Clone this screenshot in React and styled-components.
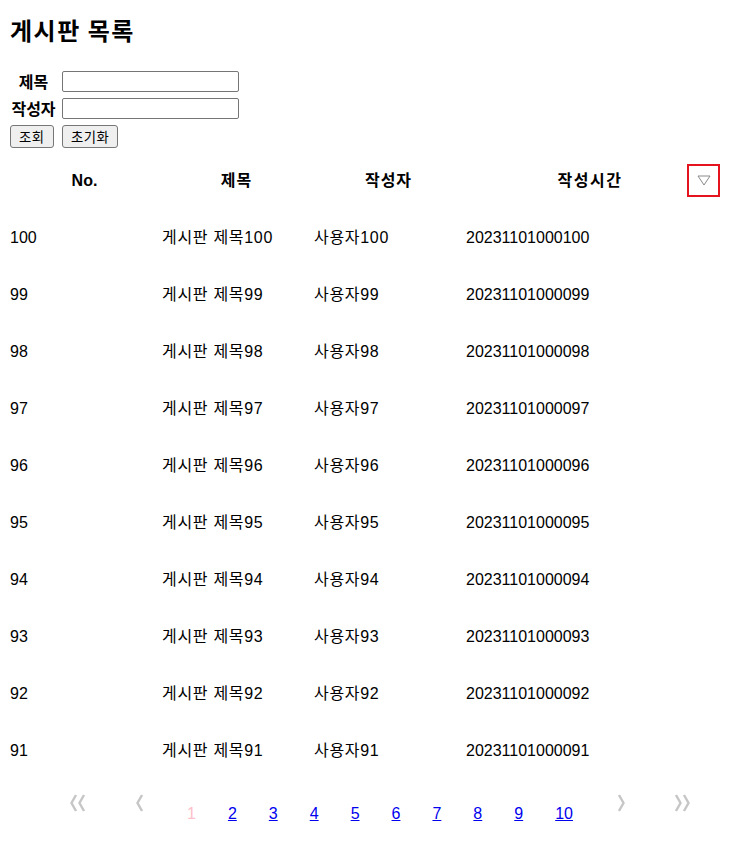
import styled, { createGlobalStyle } from 'styled-components';

const GlobalStyle = createGlobalStyle`
  body {
    margin: 0;
    background: #fff;
    color: #000;
    font-family: "Liberation Sans", "Noto Sans CJK KR", sans-serif;
  }
`;

const rows = Array.from({ length: 10 }, (_, i) => 100 - i);
const pages = [1, 2, 3, 4, 5, 6, 7, 8, 9, 10];

const Chevron = ({ dir = 'left', double = false }) => {
  const one = dir === 'left' ? 'M6 1 L1.5 9 L6 17' : 'M1 1 L5.5 9 L1 17';
  return (
    <svg width={double ? 16 : 7} height="18" viewBox={double ? '0 0 16 18' : '0 0 7 18'}>
      <path d={one} fill="none" stroke="#c6c6c6" strokeWidth="2.4" />
      {double && <path d={one} transform="translate(8 0)" fill="none" stroke="#c6c6c6" strokeWidth="2.4" />}
    </svg>
  );
};

const App = () => {
  return (
    <>
      <GlobalStyle />
      <Page>
        <Title>게시판 목록</Title>
        <SearchForm>
          <Label>제목</Label>
          <Input type="text" />
          <Label>작성자</Label>
          <Input type="text" />
          <Btn>조회</Btn>
          <Btn>초기화</Btn>
        </SearchForm>

        <Board>
          <Head>No.</Head>
          <Head $spaced>제목</Head>
          <Head $spaced>작성자</Head>
          <LastHead>
            <span />
            <HeadText>작성시간</HeadText>
            <SortBtn>
              <svg width="14" height="11" viewBox="0 0 14 11">
                <path d="M1 1 L13 1 L7 10 Z" fill="none" stroke="#8a8a8a" strokeWidth="1" />
              </svg>
            </SortBtn>
          </LastHead>
          {rows.map((n) => (
            <Row key={n}>
              <Cell>{n}</Cell>
              <Cell $spaced>게시판 제목{n}</Cell>
              <Cell $spaced>사용자{n}</Cell>
              <Cell>20231101000{String(n).padStart(3, '0')}</Cell>
            </Row>
          ))}
        </Board>

        <Pager>
          <Arrow $gap={50}><Chevron dir="left" double /></Arrow>
          <Arrow $gap={44}><Chevron dir="left" /></Arrow>
          <Numbers>
            {pages.map((p) => (
              <PageLink key={p} href="#" $active={p === 1}>{p}</PageLink>
            ))}
          </Numbers>
          <Arrow $left={45}><Chevron dir="right" /></Arrow>
          <Arrow $left={50}><Chevron dir="right" double /></Arrow>
        </Pager>
      </Page>
    </>
  );
};

export default App;

const Page = styled.div`
  padding: 16px 0 0 10px;
`;

const Title = styled.h2`
  margin: 0;
  font-family: "Noto Sans CJK KR", sans-serif;
  font-size: 24px;
  font-weight: bold;
  line-height: 28px;
  letter-spacing: 1.5px;
`;

const SearchForm = styled.div`
  display: grid;
  grid-template-columns: 47px 177px;
  column-gap: 5px;
  row-gap: 6px;
  margin-top: 27px;
  align-items: center;
  justify-items: start;
`;

const Label = styled.label`
  justify-self: stretch;
  text-align: center;
  font-family: "Noto Sans CJK KR", sans-serif;
  font-size: 16px;
  font-weight: 600;
  line-height: 21px;
`;

const Input = styled.input`
  box-sizing: border-box;
  width: 177px;
  height: 21px;
  padding: 1px 2px;
  border: 1px solid #767676;
  border-radius: 2px;
  background: #fff;
`;

const Btn = styled.button`
  box-sizing: border-box;
  height: 23px;
  padding: 0 8px;
  border: 1px solid #767676;
  border-radius: 3px;
  background: #efefef;
  color: #000;
  font-family: "Noto Sans CJK KR", sans-serif;
  font-size: 13.33px;
  line-height: 19px;
  letter-spacing: 0.5px;
`;

const Board = styled.div`
  display: grid;
  grid-template-columns: 149px 149px 149px 255px;
  column-gap: 3px;
  margin-top: 4px;
`;

const Row = styled.div`
  display: contents;
`;

const Head = styled.div`
  height: 57px;
  display: flex;
  align-items: center;
  justify-content: center;
  font-size: 16px;
  line-height: 20px;
  font-weight: bold;
  letter-spacing: ${(p) => (p.$spaced ? '1px' : '0')};
`;

const LastHead = styled.div`
  height: 57px;
  display: grid;
  grid-template-columns: 1fr auto 1fr;
  align-items: center;
`;

const HeadText = styled.span`
  margin-right: 7px;
  font-size: 16px;
  line-height: 20px;
  font-weight: bold;
  letter-spacing: 1.5px;
`;

const SortBtn = styled.button`
  justify-self: end;
  box-sizing: border-box;
  width: 33px;
  height: 33px;
  margin-right: 1px;
  padding: 0;
  display: flex;
  align-items: center;
  justify-content: center;
  border: 2px solid #e5131d;
  background: #fff;
`;

const Cell = styled.div`
  height: 57px;
  display: flex;
  align-items: center;
  font-size: 16px;
  line-height: 20px;
  letter-spacing: ${(p) => (p.$spaced ? '0.7px' : '0')};
`;

const Pager = styled.div`
  display: flex;
  align-items: flex-start;
  padding: 15px 0 0 60px;
`;

const Arrow = styled.span`
  display: flex;
  margin-right: ${(p) => p.$gap || 0}px;
  margin-left: ${(p) => p.$left || 0}px;
`;

const Numbers = styled.div`
  display: flex;
  gap: 32px;
  padding-top: 11px;
`;

const PageLink = styled.a`
  font-size: 16px;
  line-height: 18px;
  color: ${(p) => (p.$active ? 'pink' : '#0000ee')};
  text-decoration: ${(p) => (p.$active ? 'none' : 'underline')};
`;
